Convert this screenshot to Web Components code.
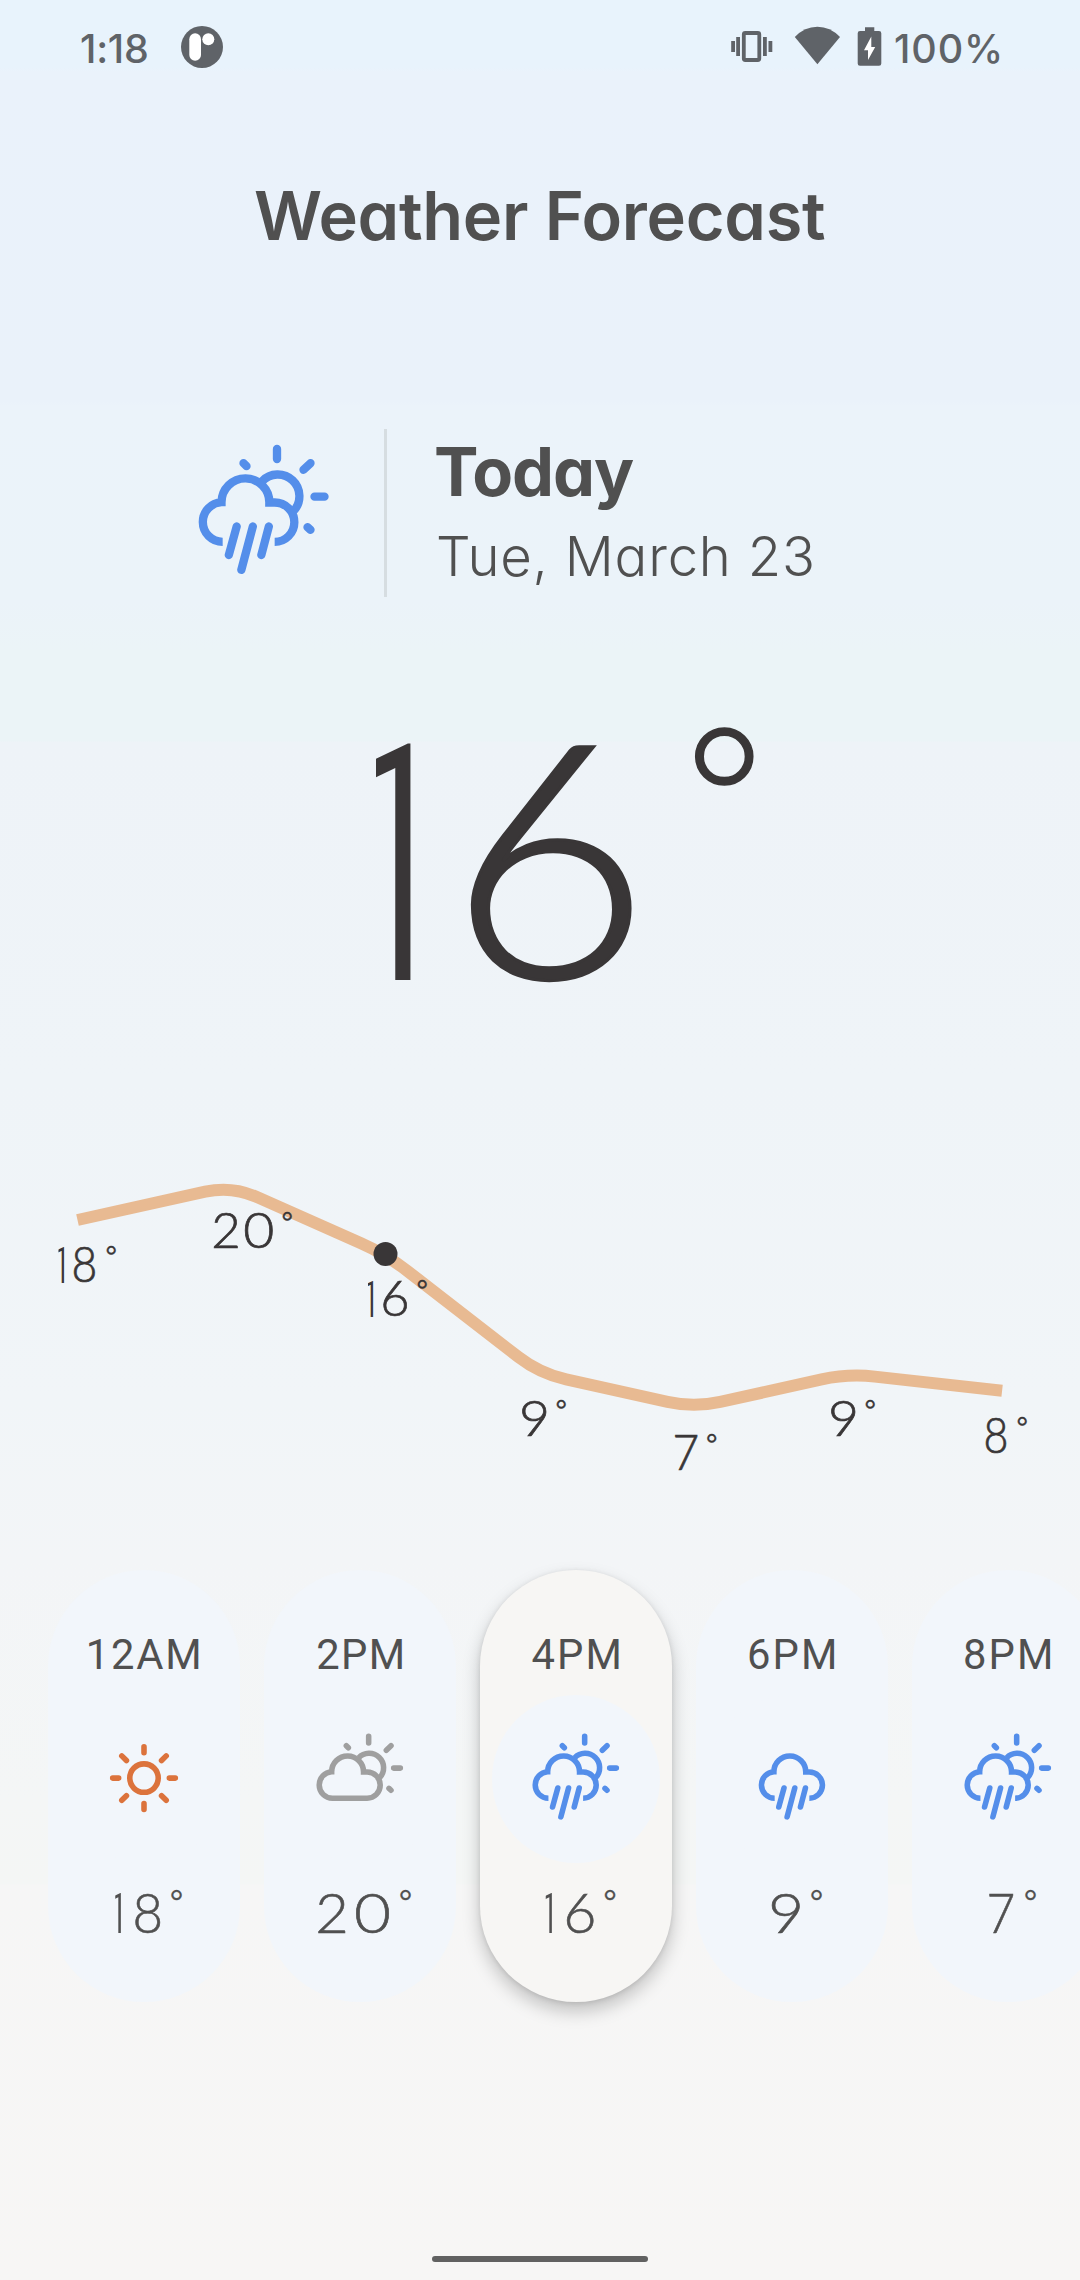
<!DOCTYPE html>
<html lang="en">
<head>
<meta charset="utf-8">
<title>Weather Forecast</title>
<style>
html,body{margin:0;padding:0}
body{width:1080px;height:2280px;overflow:hidden;font-family:Inter,"Open Sans","Liberation Sans",sans-serif;color:#505050}
</style>
</head>
<body>
<weather-app></weather-app>
<script>
const ctx = document.createElement('canvas').getContext('2d');
const measure = (s, weight, px, family) => { ctx.font = `${weight} ${px}px ${family}`; return ctx.measureText(s); };

/* A line of text whose box is its ink: `cap` is the height of the capitals, `w` the width of the ink. */
class InkText extends HTMLElement {
  connectedCallback() {
    const root = this.attachShadow({mode: 'open'});
    root.innerHTML = `<style>
      :host{display:block;flex:none;white-space:nowrap}
      span{display:block;width:max-content;font-feature-settings:"cv11","cv03","cv04"}
    </style><span><slot></slot></span>`;
    const text = this.textContent, span = root.querySelector('span');
    const weight = this.getAttribute('weight') || '400';
    const family = this.getAttribute('family') || getComputedStyle(this).fontFamily;
    const w = +this.getAttribute('w');
    const ring = text === '°';
    let px;
    if (ring) {
      const m = measure(text, weight, 1000, family);
      px = 1000 * w / (m.actualBoundingBoxLeft + m.actualBoundingBoxRight);
    } else px = 1000 * this.getAttribute('cap') / measure('H', weight, 1000, family).actualBoundingBoxAscent;
    const m = measure(text, weight, px, family);
    const H = ring ? w : +this.getAttribute('cap');
    Object.assign(span.style, {fontFamily: family, fontWeight: weight, fontSize: px + 'px', lineHeight: H + 'px'});
    this.style.width = w + 'px';
    this.style.height = H + 'px';
    const ink = span.getBoundingClientRect().width + m.actualBoundingBoxLeft - (m.width - m.actualBoundingBoxRight);
    const n = text.length - 1;
    if (n) span.style.letterSpacing = (w - ink) / n + 'px';
    const base = (H + m.fontBoundingBoxAscent - m.fontBoundingBoxDescent) / 2;
    const y = ring ? m.actualBoundingBoxAscent - base : H - base;
    span.style.transform = `translate(${m.actualBoundingBoxLeft}px,${y}px)`;
  }
}
customElements.define('ink-text', InkText);

/* Wide geometric digits with a raised degree ring. Widths are fractions of the digit height;
   the flag of the 1 is cut to a short stub by its box. */
const DIGIT = {0: .83, 1: .15, 2: .7, 6: .694, 7: .63, 8: .64, 9: .71};
class TempValue extends HTMLElement {
  connectedCallback() {
    const a = n => this.getAttribute(n);
    const cap = +a('cap'), w = +a('w'), bold = +a('stroke'), digits = [...a('value')];
    const inks = digits.map(c => digits.length > 1 ? DIGIT[c] * cap : w);
    const gap = digits.length > 1 ? (w - inks.reduce((s, x) => s + x)) / (digits.length - 1) : 0;
    const glyphs = digits.map((c, i) => {
      const one = c === '1';
      const family = one ? 'Roboto, sans-serif' : 'Lato, sans-serif';
      const weight = 300;
      const stroke = one ? 0 : bold;
      const px = 1000 * (cap - stroke) / measure('7', weight, 1000, family).actualBoundingBoxAscent;
      const m = measure(c, weight, px, family);
      const target = one ? .29 * cap : inks[i] - bold;
      const sx = target / (m.actualBoundingBoxLeft + m.actualBoundingBoxRight);
      const base = (cap + m.fontBoundingBoxAscent - m.fontBoundingBoxDescent) / 2;
      const tx = m.actualBoundingBoxLeft * sx + (one ? inks[i] - target : bold / 2);
      return `<span class="box${one ? ' one' : ''}" style="width:${inks[i]}px;margin-left:${i ? gap : 0}px"><span class="g" style="font:${weight} ${px}px/${cap}px ${family};-webkit-text-stroke:${stroke}px;transform:translate(${tx}px,${cap - base - stroke / 2}px) scaleX(${sx})">${c}</span></span>`;
    }).join('');
    this.attachShadow({mode: 'open'}).innerHTML = `<style>
      :host{display:flex;align-items:flex-start;gap:${a('gap')}px}
      .num{display:block;flex:none;width:${w}px;height:${cap}px;line-height:${cap}px;font-size:0;white-space:nowrap}
      .box{display:inline-block;height:${cap}px;vertical-align:top}
      .one{clip-path:inset(-1px -1px -1px 0)}
      .g{display:inline-block;vertical-align:top;transform-origin:0 0}
      .deg{margin-top:-${a('rise')}px;-webkit-text-stroke:${a('ring-stroke')}px}
    </style>
    <span class="num">${glyphs}</span>
    <ink-text class="deg" w="${a('ring')}" weight="${a('ring-weight')}">°</ink-text>`;
  }
}
customElements.define('temp-value', TempValue);

class WeatherIcon extends HTMLElement {
  connectedCallback() {
    const cloudTop = 'A59.5 59.5 0 0 1 69.5 366A59.5 59.5 0 0 1 125.5 306.600A71.5 71.5 0 0 1 269 307.5L285 307.5A59 59 0 0 1 285 425.5';
    const cloud = `<path d="M129 425.5${cloudTop}"/>`;
    const rain = '<path class="r" d="M171 379.5L147.5 465M219.500 379.500L185 509.500M267.500 379.500L245 465"/>';
    const sun = '<path d="M247 243.800A64.500 64.500 0 0 1 341.500 333"/><path class="r" d="M292 147V177M191.500 189.500L200.500 198.500M392.500 189.500L371.500 209.500M404.500 290H434.500M383.500 381.500L392.500 389.500"/>';
    const art = {
      'sun-rain': cloud + sun + rain,
      'rain': `<g transform="translate(46)">${cloud}${rain}</g>`,
      'sun-cloud': `<path d="M129 425.5${cloudTop}Z"/>` + sun,
      'sun': '<g transform="translate(253 335)"><circle r="64"/><path class="r" d="M0-141V-114M0 141V114M-141 0H-114M141 0H114M-100-100L-79-79M100-100L79-79M-100 100L-79 79M100 100L79 79"/></g>'
    }[this.getAttribute('kind')];
    this.attachShadow({mode: 'open'}).innerHTML = `<style>
      :host{display:block;flex:none;width:96px;height:96px;color:#548eea}
      :host([tone=orange]){color:#dc733c}
      :host([tone=grey]){color:#9f9f9f}
      :host([large]){width:144px;height:144px}
      svg{display:block;width:100%;height:100%;fill:none;stroke:currentColor;stroke-width:25}
      .r{stroke-linecap:round}
    </style><svg viewBox="37 123 432 432">${art}</svg>`;
  }
}
customElements.define('weather-icon', WeatherIcon);

class StatusBar extends HTMLElement {
  connectedCallback() {
    this.attachShadow({mode: 'open'}).innerHTML = `<style>
      :host{display:flex;align-items:flex-start;height:96px;padding:0 80px 0 81px;box-sizing:border-box;color:#5f6368}
      ink-text{margin-top:34px}
      svg{display:block;flex:none;height:96px;fill:currentColor}
      .grow{flex:1}
    </style>
    <ink-text cap="29" w="66" weight="500">1:18</ink-text>
    <svg width="82" viewBox="147 0 82 96"><circle cx="202" cy="47" r="21"/><rect x="189.300" y="33.300" width="11.700" height="27.500" rx="5.850" fill="#fff"/><circle cx="208.300" cy="39.300" r="6" fill="#fff"/></svg>
    <div class="grow"></div>
    <svg width="170" viewBox="725 0 170 96">
      <rect x="743.800" y="33" width="15.500" height="27" rx="1.500" fill="none" stroke="currentColor" stroke-width="3.800"/>
      <path d="M736.200 37h3.800v19h-3.800zM731.200 41h3.800v11h-3.800zM763 37h3.800v19H763zM768.500 41h3.800v11h-3.800z"/>
      <path d="M794.800 37Q804.500 26.700 817.400 26.700T840 37L817.400 64.300Z"/>
      <path d="M865 31V27.300h9.300V31H879q2.300 0 2.300 2.300V63.500q0 2.300-2.300 2.300H860q-2.300 0-2.300-2.300V33.300q0-2.300 2.300-2.300z"/>
      <path fill="#fff" d="M871.300 36.500L864 50.300H868V60L875.200 47H871.300Z"/>
    </svg>
    <ink-text cap="29" w="105" weight="450">100%</ink-text>`;
  }
}
customElements.define('status-bar', StatusBar);

class TodayPanel extends HTMLElement {
  connectedCallback() {
    this.attachShadow({mode: 'open'}).innerHTML = `<style>
      :host{display:flex;align-items:flex-start;height:168px;padding-left:192px}
      weather-icon{margin-top:12px}
      .bar{width:3px;height:168px;background:#d6dde1;margin:0 49px 0 48px}
      .text{display:flex;flex-direction:column;gap:40px;padding-top:18px}
      .date{margin-left:2px}
    </style>
    <weather-icon kind="sun-rain" large></weather-icon>
    <div class="bar"></div>
    <div class="text">
      <ink-text cap="49" w="198" weight="700">Today</ink-text>
      <ink-text class="date" cap="40" w="374" weight="300">Tue, March 23</ink-text>
    </div>`;
  }
}
customElements.define('today-panel', TodayPanel);

class TempChart extends HTMLElement {
  connectedCallback() {
    const pts = [18, 20, 16, 9, 7, 9, 8].map((t, i) => [77.5 + i * 154.1, 1220 + (18 - t) * 17.07 - 1150]);
    const cut = 27;
    let d = `M${pts[0]}`;
    for (let i = 1; i < pts.length - 1; i++) {
      const p = pts[i], toward = q => {
        const l = Math.hypot(q[0] - p[0], q[1] - p[1]);
        return [p[0] + (q[0] - p[0]) * cut / l, p[1] + (q[1] - p[1]) * cut / l];
      };
      d += `L${toward(pts[i - 1])}Q${p} ${toward(pts[i + 1])}`;
    }
    d += `L${pts[6]}`;
    const labels = [[18,58.500,98,37.500,10],[20,212.500,64,60.500,9],[16,368,132,40,9],[9,522,252,25,9],[7,675,286,22.500,9],[9,831,252,25,9],[8,985,269,22,10]];
    this.attachShadow({mode: 'open'}).innerHTML = `<style>
      :host{display:block;position:relative;height:340px;color:#393637}
      svg{display:block}
      temp-value{position:absolute}
    </style>
    <svg width="1080" height="340" viewBox="0 0 1080 340"><path d="${d}" fill="none" stroke="#e8ba92" stroke-width="12"/><circle cx="385.500" cy="104" r="12" fill="#393637"/></svg>
    ${labels.map(([v, x, y, w, g]) => `<temp-value style="left:${x}px;top:${y}px" value="${v}" cap="35.500" w="${w}" gap="${g}" stroke=".7" ring="9" ring-stroke=".4" rise="2" ring-weight="300"></temp-value>`).join('')}`;
  }
}
customElements.define('temp-chart', TempChart);

class HourCard extends HTMLElement {
  connectedCallback() {
    const a = n => this.getAttribute(n);
    this.attachShadow({mode: 'open'}).innerHTML = `<style>
      :host{display:flex;flex-direction:column;align-items:center;flex:none;box-sizing:border-box;width:192px;height:432px;padding-top:69px;border-radius:96px;background:#f2f6fb}
      :host([active]){background:#f7f6f4;box-shadow:0 9px 18px rgba(0,0,0,.22),0 1px 5px rgba(0,0,0,.1)}
      .disc{display:flex;align-items:center;justify-content:center;width:168px;height:168px;border-radius:50%;background:#f2f6fb;margin:26px 0 30px}
      .time{margin-right:1px}
      temp-value{padding-left:9px}
    </style>
    <ink-text class="time" cap="30" w="${a('tw')}" weight="400" family="Roboto, sans-serif">${a('time')}</ink-text>
    <div class="disc"><weather-icon kind="${a('icon')}" tone="${a('tone') || ''}"></weather-icon></div>
    <temp-value value="${a('temp')}" cap="40" w="${a('w')}" gap="11" stroke=".6" ring="10.500" ring-stroke=".3" rise="2" ring-weight="300"></temp-value>`;
  }
}
customElements.define('hour-card', HourCard);

class WeatherApp extends HTMLElement {
  connectedCallback() {
    this.attachShadow({mode: 'open'}).innerHTML = `<style>
      :host{display:flex;flex-direction:column;width:1080px;height:2280px;overflow:hidden;
        background:linear-gradient(#e8f3fc 0,#e8f3fc 68px,#eaf2fb 72px,#eaf2fa 402px,#ebf3fa 405px,#ebf3f9 600px,#ebf4f7 650px,#ebf4f7 741px,#eef3f8 742px,#eff4f8 1080px,#f1f5f8 1400px,#f3f5f7 1560px,#f4f6f6 1800px,#f4f6f5 1884px,#f6f6f6 1885px,#f7f6f5 2280px)}
      .title{margin:95px 0 0 255px}
      today-panel{margin-top:189px}
      .now{color:#393637;margin:145px 0 0 376px}
      temp-chart{margin-top:170px}
      .hours{display:flex;gap:24px;padding-left:48px;margin-top:80px}
      .home{width:216px;height:6px;border-radius:3px;background:#616161;margin:254px auto 0}
    </style>
    <status-bar></status-bar>
    <ink-text class="title" cap="49" w="570" weight="600">Weather Forecast</ink-text>
    <today-panel></today-panel>
    <temp-value class="now" value="16" cap="238" w="258" gap="61" stroke="3" ring="61" ring-stroke="1.500" rise="14" ring-weight="200"></temp-value>
    <temp-chart></temp-chart>
    <div class="hours">
      <hour-card time="12AM" tw="109.500" icon="sun" tone="orange" temp="18" w="45"></hour-card>
      <hour-card time="2PM" tw="84.500" icon="sun-cloud" tone="grey" temp="20" w="71"></hour-card>
      <hour-card active time="4PM" tw="86" icon="sun-rain" temp="16" w="48"></hour-card>
      <hour-card time="6PM" tw="85" icon="rain" temp="9" w="29"></hour-card>
      <hour-card time="8PM" tw="85" icon="sun-rain" temp="7" w="25"></hour-card>
    </div>
    <div class="home"></div>`;
  }
}
customElements.define('weather-app', WeatherApp);
</script>
</body>
</html>
